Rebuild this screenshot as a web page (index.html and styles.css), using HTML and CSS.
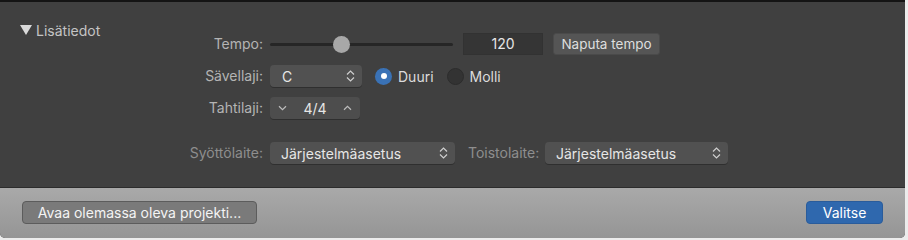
FILE: index.html
```html
<!DOCTYPE html>
<html>
<head>
<meta charset="utf-8">
<link rel="stylesheet" href="styles.css">
</head>
<body>
<div class="window">
  <div class="main">
    <div class="disclosure"><span class="tri"></span><span>Lisätiedot</span></div>
    <div class="form">
      <div class="label">Tempo:</div>
      <div class="ctrl">
        <div class="slider"><div class="track"></div><div class="knob"></div></div>
        <div class="field">120</div>
        <div class="btn">Naputa tempo</div>
      </div>
      <div class="label">Sävellaji:</div>
      <div class="ctrl">
        <div class="select key"><span>C</span>
          <svg class="updown" width="9" height="14" viewBox="0 0 9 14"><path d="M1 5.5 L4.5 2 L8 5.5 M1 8.5 L4.5 12 L8 8.5" fill="none" stroke="#cfcfcf" stroke-width="1.2"/></svg>
        </div>
        <div class="radio on"><span class="dot"></span></div><span class="rtext">Duuri</span>
        <div class="radio off"></div><span class="rtext">Molli</span>
      </div>
      <div class="label">Tahtilaji:</div>
      <div class="ctrl">
        <div class="stepper">
          <svg width="9" height="6" viewBox="0 0 9 6"><path d="M1 1.2 L4.5 4.6 L8 1.2" fill="none" stroke="#bdbdbd" stroke-width="1.2"/></svg>
          <span>4/4</span>
          <svg width="9" height="6" viewBox="0 0 9 6"><path d="M1 4.8 L4.5 1.4 L8 4.8" fill="none" stroke="#bdbdbd" stroke-width="1.2"/></svg>
        </div>
      </div>
      <div class="label dim spaced">Syöttölaite:</div>
      <div class="ctrl spaced">
        <div class="select dev1"><span>Järjestelmäasetus</span>
          <svg class="updown" width="9" height="14" viewBox="0 0 9 14"><path d="M1 5.5 L4.5 2 L8 5.5 M1 8.5 L4.5 12 L8 8.5" fill="none" stroke="#cfcfcf" stroke-width="1.2"/></svg>
        </div>
        <span class="label dim out">Toistolaite:</span>
        <div class="select dev2"><span>Järjestelmäasetus</span>
          <svg class="updown" width="9" height="14" viewBox="0 0 9 14"><path d="M1 5.5 L4.5 2 L8 5.5 M1 8.5 L4.5 12 L8 8.5" fill="none" stroke="#cfcfcf" stroke-width="1.2"/></svg>
        </div>
      </div>
    </div>
  </div>
  <div class="footer">
    <div class="fbtn">Avaa olemassa oleva projekti...</div>
    <div class="fbtn primary">Valitse</div>
  </div>
</div>
</body>
</html>
```

FILE: styles.css
```css
* { box-sizing: border-box; }
html, body { margin: 0; padding: 0; background: #ececec; }
body { font-family: Inter, "Noto Sans", sans-serif; font-size: 14px; }
.window {
  width: 905px;
  height: 238px;
  display: flex;
  flex-direction: column;
  border-radius: 0 0 5px 5px;
  overflow: hidden;
  background: #404040;
}
.main {
  height: 188px;
  border-top: 2px solid #141414;
  border-bottom: 1px solid #2c2c2c;
  background: #404040;
  position: relative;
  padding-top: 20px;
}
.disclosure {
  display: flex;
  align-items: center;
  gap: 4px;
  margin-left: 20px;
  color: #c4c4c4;
  height: 16px;
}
.tri {
  width: 0; height: 0;
  border-left: 6px solid transparent;
  border-right: 6px solid transparent;
  border-top: 10px solid #dadada;
}
.form {
  display: grid;
  grid-template-columns: 93px auto;
  column-gap: 7px;
  row-gap: 10px;
  margin-left: 170px;
  margin-top: -5px;
}
.label {
  color: #b4b4b4;
  text-align: right;
  height: 22px;
  line-height: 22px;
  white-space: nowrap;
}
.label.dim { color: #8e8e8e; }
.spaced { margin-top: 13px; }
.ctrl {
  display: flex;
  align-items: center;
  height: 22px;
}
.slider {
  position: relative;
  width: 183px;
  height: 22px;
  margin-right: 10px;
}
.track {
  position: absolute;
  left: 0; right: 0; top: 10px;
  height: 3px;
  border-radius: 2px;
  background: #262626;
}
.knob {
  position: absolute;
  left: 63px; top: 3px;
  width: 17px; height: 17px;
  border-radius: 50%;
  background: #a8a8a8;
}
.field {
  width: 80px; height: 22px;
  background: #353535;
  border: 1px solid #323232;
  color: #e6e6e6;
  text-align: center;
  line-height: 20px;
  margin-right: 10px;
}
.btn {
  width: 107px; height: 22px;
  background: #555555;
  border-radius: 3px;
  border: 1px solid #4a4a4a;
  color: #dedede;
  text-align: center;
  line-height: 20px;
  font-size: 13.5px;
}
.select {
  height: 22px;
  background: #515151;
  border-radius: 4px;
  display: flex;
  align-items: center;
  justify-content: space-between;
  padding: 0 7px 0 11px;
  color: #e6e6e6;
  box-shadow: 0 1px 0 #2f2f2f;
}
.select.key { width: 92px; padding-left: 12px; }
.select.dev1 { width: 185px; padding-left: 11px; }
.select.dev2 { width: 183px; padding-left: 11px; }
.radio {
  width: 17px; height: 17px;
  border-radius: 50%;
  display: flex; align-items: center; justify-content: center;
}
.radio.on { background: #3a72b6; margin-left: 13px; }
.radio.off { background: #333333; border: 1px solid #2c2c2c; margin-left: 13px; }
.dot { width: 6px; height: 6px; border-radius: 50%; background: #ffffff; }
.rtext { color: #dcdcdc; margin-left: 6px; }
.stepper {
  width: 90px; height: 22px;
  background: #4d4d4d;
  border-radius: 4px;
  display: flex;
  align-items: center;
  justify-content: space-between;
  padding: 0 8px 0 8px;
  color: #e6e6e6;
  box-shadow: 0 1px 0 #2f2f2f;
}
.out { width: 72px; text-align: left; margin-left: 13px; margin-right: 5px; }
.footer {
  flex: 1;
  background: linear-gradient(#a9a9a9, #959595);
  display: flex;
  align-items: center;
  justify-content: space-between;
  padding: 0 22px 0 22px;
  padding-bottom: 1px;
}
.fbtn {
  height: 23px;
  width: 235px;
  border-radius: 4px;
  background: #7a7a7a;
  border: 1px solid #5c5c5c;
  color: #f4f4f4;
  text-align: center;
  line-height: 21px;
}
.fbtn.primary {
  width: 77px;
  background: #2f68ae;
  border-color: #2a5c9b;
  color: #ffffff;
}
```
